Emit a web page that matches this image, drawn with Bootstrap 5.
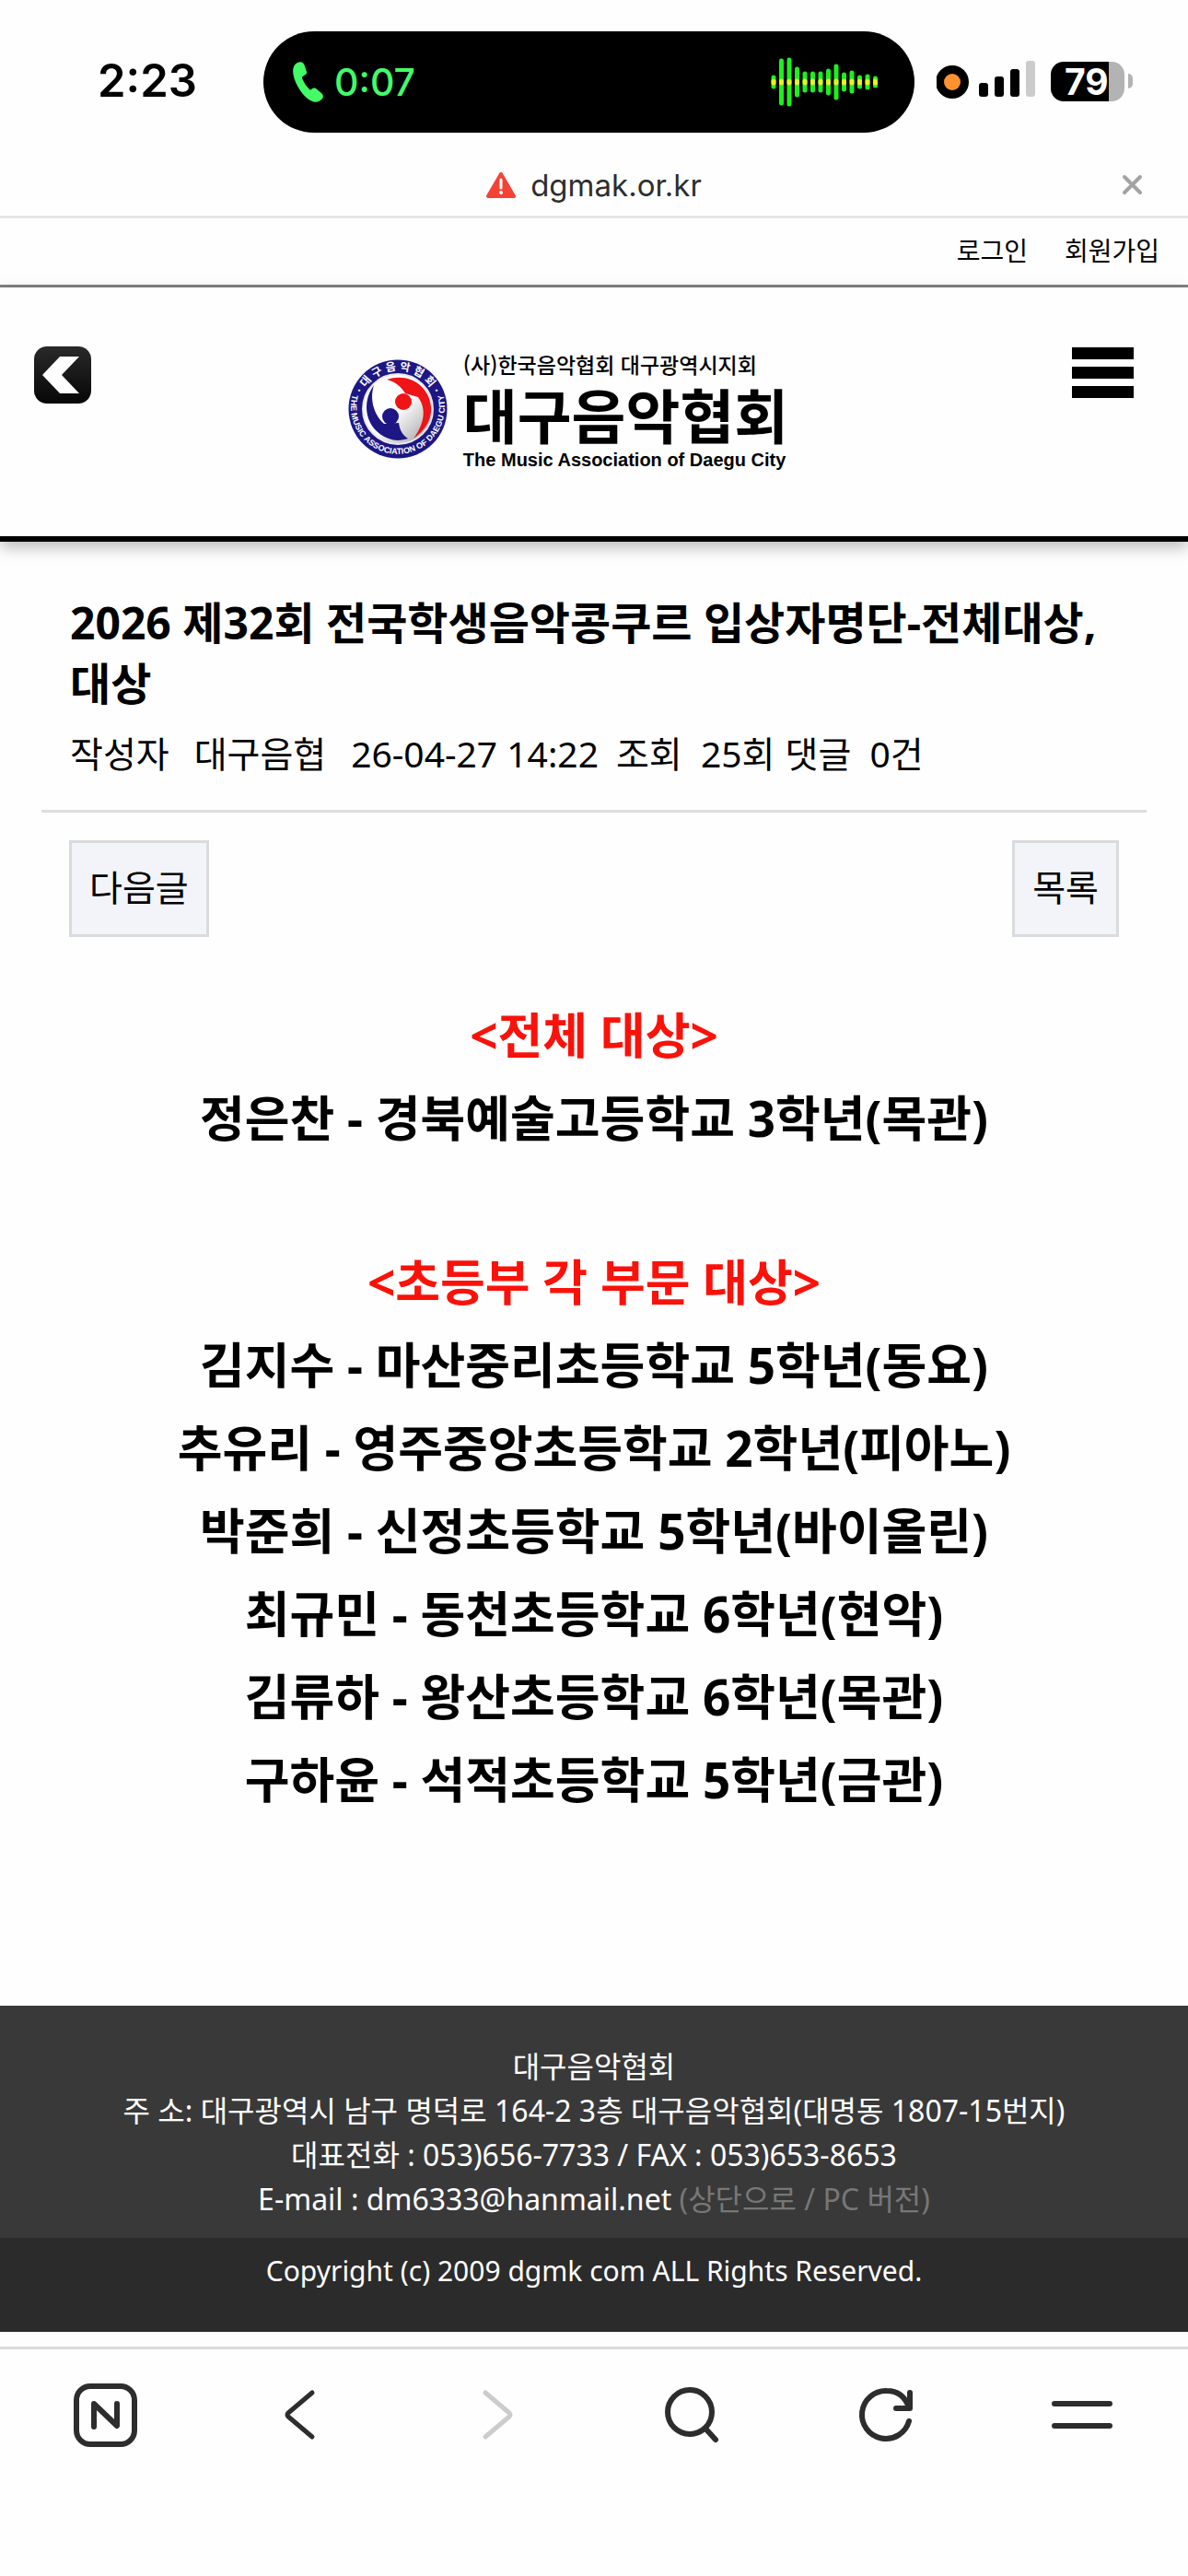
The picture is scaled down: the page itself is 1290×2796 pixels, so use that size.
<!DOCTYPE html>
<html lang="ko">
<head>
<meta charset="utf-8">
<meta name="viewport" content="width=device-width, initial-scale=1">
<title>대구음악협회</title>
<link href="https://cdn.jsdelivr.net/npm/bootstrap@5.3.0/dist/css/bootstrap.min.css" rel="stylesheet">
<style>
body{font-family:"Noto Sans","Noto Sans CJK KR",sans-serif;color:#000;background:#fefefe}
a{color:inherit;text-decoration:none}
svg{display:block}
.phone-bar{height:178px;padding:34px 60px 0 106px;font-family:Inter,sans-serif}
.phone-side{height:108px}
.clock{font-size:49px;font-weight:600;line-height:60px;width:180px}
.island{height:110px;border-radius:55px;background:#000;color:#43fb66;padding:0 38px 0 32px}
.call-time{font-size:41px;font-weight:500;line-height:52px}
.battery{width:80px;height:43px;border-radius:14px;background:linear-gradient(90deg,#000 63px,#b3b3b3 63px);color:#fff;font-size:39px;font-weight:700;line-height:43px;padding-left:15px}
.battery-tip{width:5px;height:16px;border-radius:0 8px 8px 0;background:#b3b3b3}
.url-bar{height:59px;border-bottom:3px solid #e6e6e6;padding-bottom:10px;font-family:Inter,sans-serif;font-size:33px;line-height:44px;color:#2e2e2e}
.url-close{right:49px;top:11px}
.member-bar{height:75px;border-bottom:3px solid #808280;padding:0 31px 2px;gap:40px;font-size:28px;line-height:40px}
.site-head{height:276px;border-bottom:6px solid #000;box-shadow:0 6px 16px rgba(0,0,0,.28);padding:63px 59px 0 36px}
.brand{padding:6px 30px 0 0;gap:17px;font-family:"Noto Sans CJK KR",sans-serif}
.brand-top{font-size:23px;font-weight:500;line-height:28px}
.brand-name{font-size:64px;font-weight:700;line-height:78px}
.brand-en{font-family:"Liberation Sans",sans-serif;font-size:20px;font-weight:700;line-height:24px}
.post-head{margin:0 45px;padding:55px 31px 32px;border-bottom:3px solid #ddd}
.post-title{font-size:48px;font-weight:700;line-height:66px;margin:0}
.post-meta{font-size:39px;line-height:58px;column-gap:11px;padding-top:14px}
.post-actions{padding:30px 75px 0}
.post-btn{height:105px;border:3px solid #d9dcdc;border-radius:0;background:#f2f4f9;color:#000;font-size:39px;line-height:54px;padding:0 19px 4px}
.winners{font-size:53px;font-weight:700;line-height:90px;padding:62px 20px 200px}
.winners h2{font:inherit;color:#fa120a;margin:0}
.winners p,.winners ul{margin:0}
.winners section+section{margin-top:88px}
.foot{background:#393939;color:#fff;font-size:32px;line-height:48px;padding:42px 20px 18px}
.foot-top{color:#777}
.foot-copy{background:#2b2b2b;color:#fff;font-size:30px;line-height:48px;padding:12px 20px 42px}
.tool-bar{margin-top:16px;border-top:3px solid #dcdcdc;padding:36px 81px 138px 79px;color:#2d2d2d}
.tool-bar button{width:70px;height:70px}
</style>
</head>
<body>
<header class="phone-bar d-flex align-items-start">
  <div class="phone-side clock d-flex align-items-center flex-shrink-0">2:23</div>
  <div class="island flex-grow-1 d-flex align-items-center justify-content-between">
    <div class="d-flex align-items-center gap-2">
      <svg width="33" height="44" viewBox="0 0 33 44" fill="#43fb66"><path d="M5 1C9-1 12 1 13 5L15 11C16 15 9 15 10 18C12 23 15 27 18 30C20 32 21 27 25 29L31 34C35 38 32 41 28 43C22 46 12 39 6 28C0 18-3 5 5 1Z"/></svg>
      <span class="call-time ms-1">0:07</span>
    </div>
    <svg width="118" height="54" viewBox="0 0 118 54" fill="none" stroke-linecap="round" stroke-width="5">
      <path stroke="#1df01d" d="M3 22v10M11.500 4v46M20 3v48M28.500 13v28M37 18v18M45.500 18v18M54 18v18M62.500 15v24M71 10v34M79.500 19v16M88 17v20M96.500 22v10M105 21v12M113.500 23v8"/>
      <path stroke="#e8f51c" d="M3 26v2M11.500 26v2M20 26v2M28.500 26v2M37 26v2M45.500 26v2M54 26v2M62.500 26v2M71 26v2M79.500 26v2M88 26v2M96.500 26v2M105 26v2M113.500 26v2"/>
    </svg>
  </div>
  <div class="phone-side d-flex align-items-center flex-shrink-0 ps-4">
    <svg width="108" height="44" viewBox="0 0 108 44"><circle cx="17" cy="23" r="18"/><circle cx="17" cy="23" r="9" fill="#ff9230"/><rect x="46" y="24" width="10" height="15" rx="3"/><rect x="63" y="17" width="10" height="22" rx="3"/><rect x="80" y="9" width="10" height="30" rx="3"/><rect x="97" y="0" width="10" height="39" rx="3" fill="#ccc"/></svg>
    <div class="d-flex align-items-center ms-3"><div class="battery">79</div><div class="battery-tip ms-1"></div></div>
  </div>
</header>
<div class="url-bar d-flex align-items-center justify-content-center position-relative">
  <svg class="me-3" width="32" height="28" viewBox="0 0 32 28"><path d="M16 2 30 26H2Z" fill="#f44336" stroke="#f44336" stroke-width="4" stroke-linejoin="round"/><path d="M16 8v9" stroke="#fff" stroke-width="3" stroke-linecap="round"/><circle cx="16" cy="22" r="2" fill="#fff"/></svg>
  <span>dgmak.or.kr</span>
  <button class="btn p-0 border-0 position-absolute url-close" type="button" aria-label="닫기"><svg width="23" height="23" viewBox="0 0 23 23" stroke="#a3a3a3" stroke-width="4" stroke-linecap="round"><path d="M3 3 20 20M20 3 3 20"/></svg></button>
</div>
<nav class="member-bar d-flex align-items-center justify-content-end"><a href="#">로그인</a><a href="#">회원가입</a></nav>
<div class="site-head d-flex justify-content-between align-items-start position-relative">
  <button class="btn p-0 border-0" type="button" aria-label="뒤로">
    <svg width="64" height="64" viewBox="0 0 64 64"><defs><linearGradient id="shade" x2="0" y2="1"><stop stop-color="#292929"/><stop offset="1" stop-color="#070707"/></linearGradient></defs><rect x="1" y="1" width="62" height="62" rx="14" fill="url(#shade)"/><path d="M10 32 29 12H50L31 32 50 52H29Z" fill="#fff"/></svg>
  </button>
  <a class="brand d-flex" href="#">
    <svg class="mt-2" width="108" height="110" viewBox="17 20 108 110">
      <defs>
        <linearGradient id="silver" x1="0" y1="0" x2="1" y2="1"><stop offset=".5" stop-color="#fff"/><stop offset="1" stop-color="#999"/></linearGradient>
        <path id="arcTop" d="M29 75A42 42 0 0 1 113 75"/>
        <path id="arcLow" d="M24 53A51 51 0 1 0 118 53"/>
      </defs>
      <circle cx="71" cy="75" r="53.500" fill="#1c1784"/>
      <circle cx="71" cy="75" r="38" fill="url(#silver)" stroke="#e8e8f0" stroke-width="2"/>
      <path d="M45 49C31 68 35 97 61 107C68 110 76 109 82 107C76 103 73 98 72 90L56 91C48 84 39 68 45 49Z" fill="#1c1784"/>
      <path d="M59 43C82 35 105 49 107 73C108 88 99 99 88 107C99 92 103 76 93 62L79 58C75 51 68 45 59 43Z" fill="#ee1417"/>
      <circle cx="77" cy="67" r="9" fill="#ee1417"/><circle cx="63" cy="83" r="9" fill="#1c1784"/>
      <g fill="#fff" font-weight="700" text-anchor="middle">
        <text font-family="Noto Sans CJK KR, sans-serif" font-size="12"><textPath href="#arcTop" startOffset="50%">· 대 구 음 악 협 회 ·</textPath></text>
        <text font-family="Liberation Sans, sans-serif" font-size="9"><textPath href="#arcLow" startOffset="50%">THE MUSIC ASSOCIATION OF DAEGU CITY</textPath></text>
      </g>
    </svg>
    <span class="d-flex flex-column"><span class="brand-top">(사)한국음악협회 대구광역시지회</span><span class="brand-name">대구음악협회</span><span class="brand-en">The Music Association of Daegu City</span></span>
  </a>
  <button class="btn p-0 border-0" type="button" aria-label="메뉴"><svg width="67" height="62" viewBox="0 0 67 62"><path d="M0 2h67v13H0zM0 23h67v13H0zM0 44h67v13H0z"/></svg></button>
</div>
<main>
  <div class="post-head">
    <h1 class="post-title">2026 제32회 전국학생음악콩쿠르 입상자명단-전체대상, 대상</h1>
    <div class="post-meta d-flex flex-wrap"><span class="me-3">작성자</span><span class="me-3">대구음협</span><span class="me-2">26-04-27 14:22</span><span>조회&nbsp; 25회</span><span>댓글&nbsp; 0건</span></div>
  </div>
  <div class="post-actions d-flex justify-content-between"><button class="btn post-btn" type="button">다음글</button><button class="btn post-btn" type="button">목록</button></div>
  <article class="winners text-center">
    <section><h2>&lt;전체 대상&gt;</h2><p>정은찬 - 경북예술고등학교 3학년(목관)</p></section>
    <section><h2>&lt;초등부 각 부문 대상&gt;</h2>
      <ul class="list-unstyled"><li>김지수 - 마산중리초등학교 5학년(동요)</li><li>추유리 - 영주중앙초등학교 2학년(피아노)</li><li>박준희 - 신정초등학교 5학년(바이올린)</li><li>최규민 - 동천초등학교 6학년(현악)</li><li>김류하 - 왕산초등학교 6학년(목관)</li><li>구하윤 - 석적초등학교 5학년(금관)</li></ul>
    </section>
  </article>
</main>
<footer class="text-center">
  <div class="foot"><div>대구음악협회</div><div>주 소: 대구광역시 남구 명덕로 164-2 3층 대구음악협회(대명동 1807-15번지)</div><div>대표전화 : 053)656-7733 / FAX : 053)653-8653</div><div>E-mail : dm6333@hanmail.net <span class="foot-top">(<a href="#">상단으로</a> / <a href="#">PC 버전</a>)</span></div></div>
  <div class="foot-copy">Copyright (c) 2009 dgmk com ALL Rights Reserved.</div>
</footer>
<nav class="tool-bar d-flex justify-content-between">
  <button class="btn p-0 border-0" type="button" aria-label="홈"><svg width="70" height="70" viewBox="0 0 70 70" fill="none" stroke="#2d2d2d" stroke-width="6" stroke-linecap="round" stroke-linejoin="round"><rect x="4" y="4" width="63" height="63" rx="15"/><path d="M23 48V23L48 47V23"/></svg></button>
  <button class="btn p-0 border-0" type="button" aria-label="이전"><svg width="70" height="70" viewBox="0 0 70 70" fill="none" stroke="#2d2d2d" stroke-width="5" stroke-linecap="round" stroke-linejoin="round"><path d="M48 11 22 33Q20 35 22 37L48 59"/></svg></button>
  <button class="btn p-0 border-0" type="button" aria-label="다음"><svg width="70" height="70" viewBox="0 0 70 70" fill="none" stroke="#ccc" stroke-width="5" stroke-linecap="round" stroke-linejoin="round"><path d="M24 11 50 33Q52 35 50 37L24 59"/></svg></button>
  <button class="btn p-0 border-0" type="button" aria-label="검색"><svg width="70" height="70" viewBox="0 0 70 70" fill="none" stroke="#2d2d2d" stroke-width="6" stroke-linecap="round"><circle cx="34" cy="32" r="24"/><path d="M52 51 62 62"/></svg></button>
  <button class="btn p-0 border-0" type="button" aria-label="새로고침"><svg width="70" height="70" viewBox="0 0 70 70" fill="none" stroke="#2d2d2d" stroke-width="6" stroke-linecap="round" stroke-linejoin="round"><path d="M60 27C55 13 45 9 36 9A26 26 0 1 0 60 42"/><path d="M61 11V28H46"/></svg></button>
  <button class="btn p-0 border-0" type="button" aria-label="더보기"><svg width="70" height="70" viewBox="0 0 70 70" stroke="#2d2d2d" stroke-width="6" stroke-linecap="round"><path d="M6 23H66M6 47H66"/></svg></button>
</nav>
<script src="https://cdn.jsdelivr.net/npm/bootstrap@5.3.0/dist/js/bootstrap.bundle.min.js"></script>
</body>
</html>
